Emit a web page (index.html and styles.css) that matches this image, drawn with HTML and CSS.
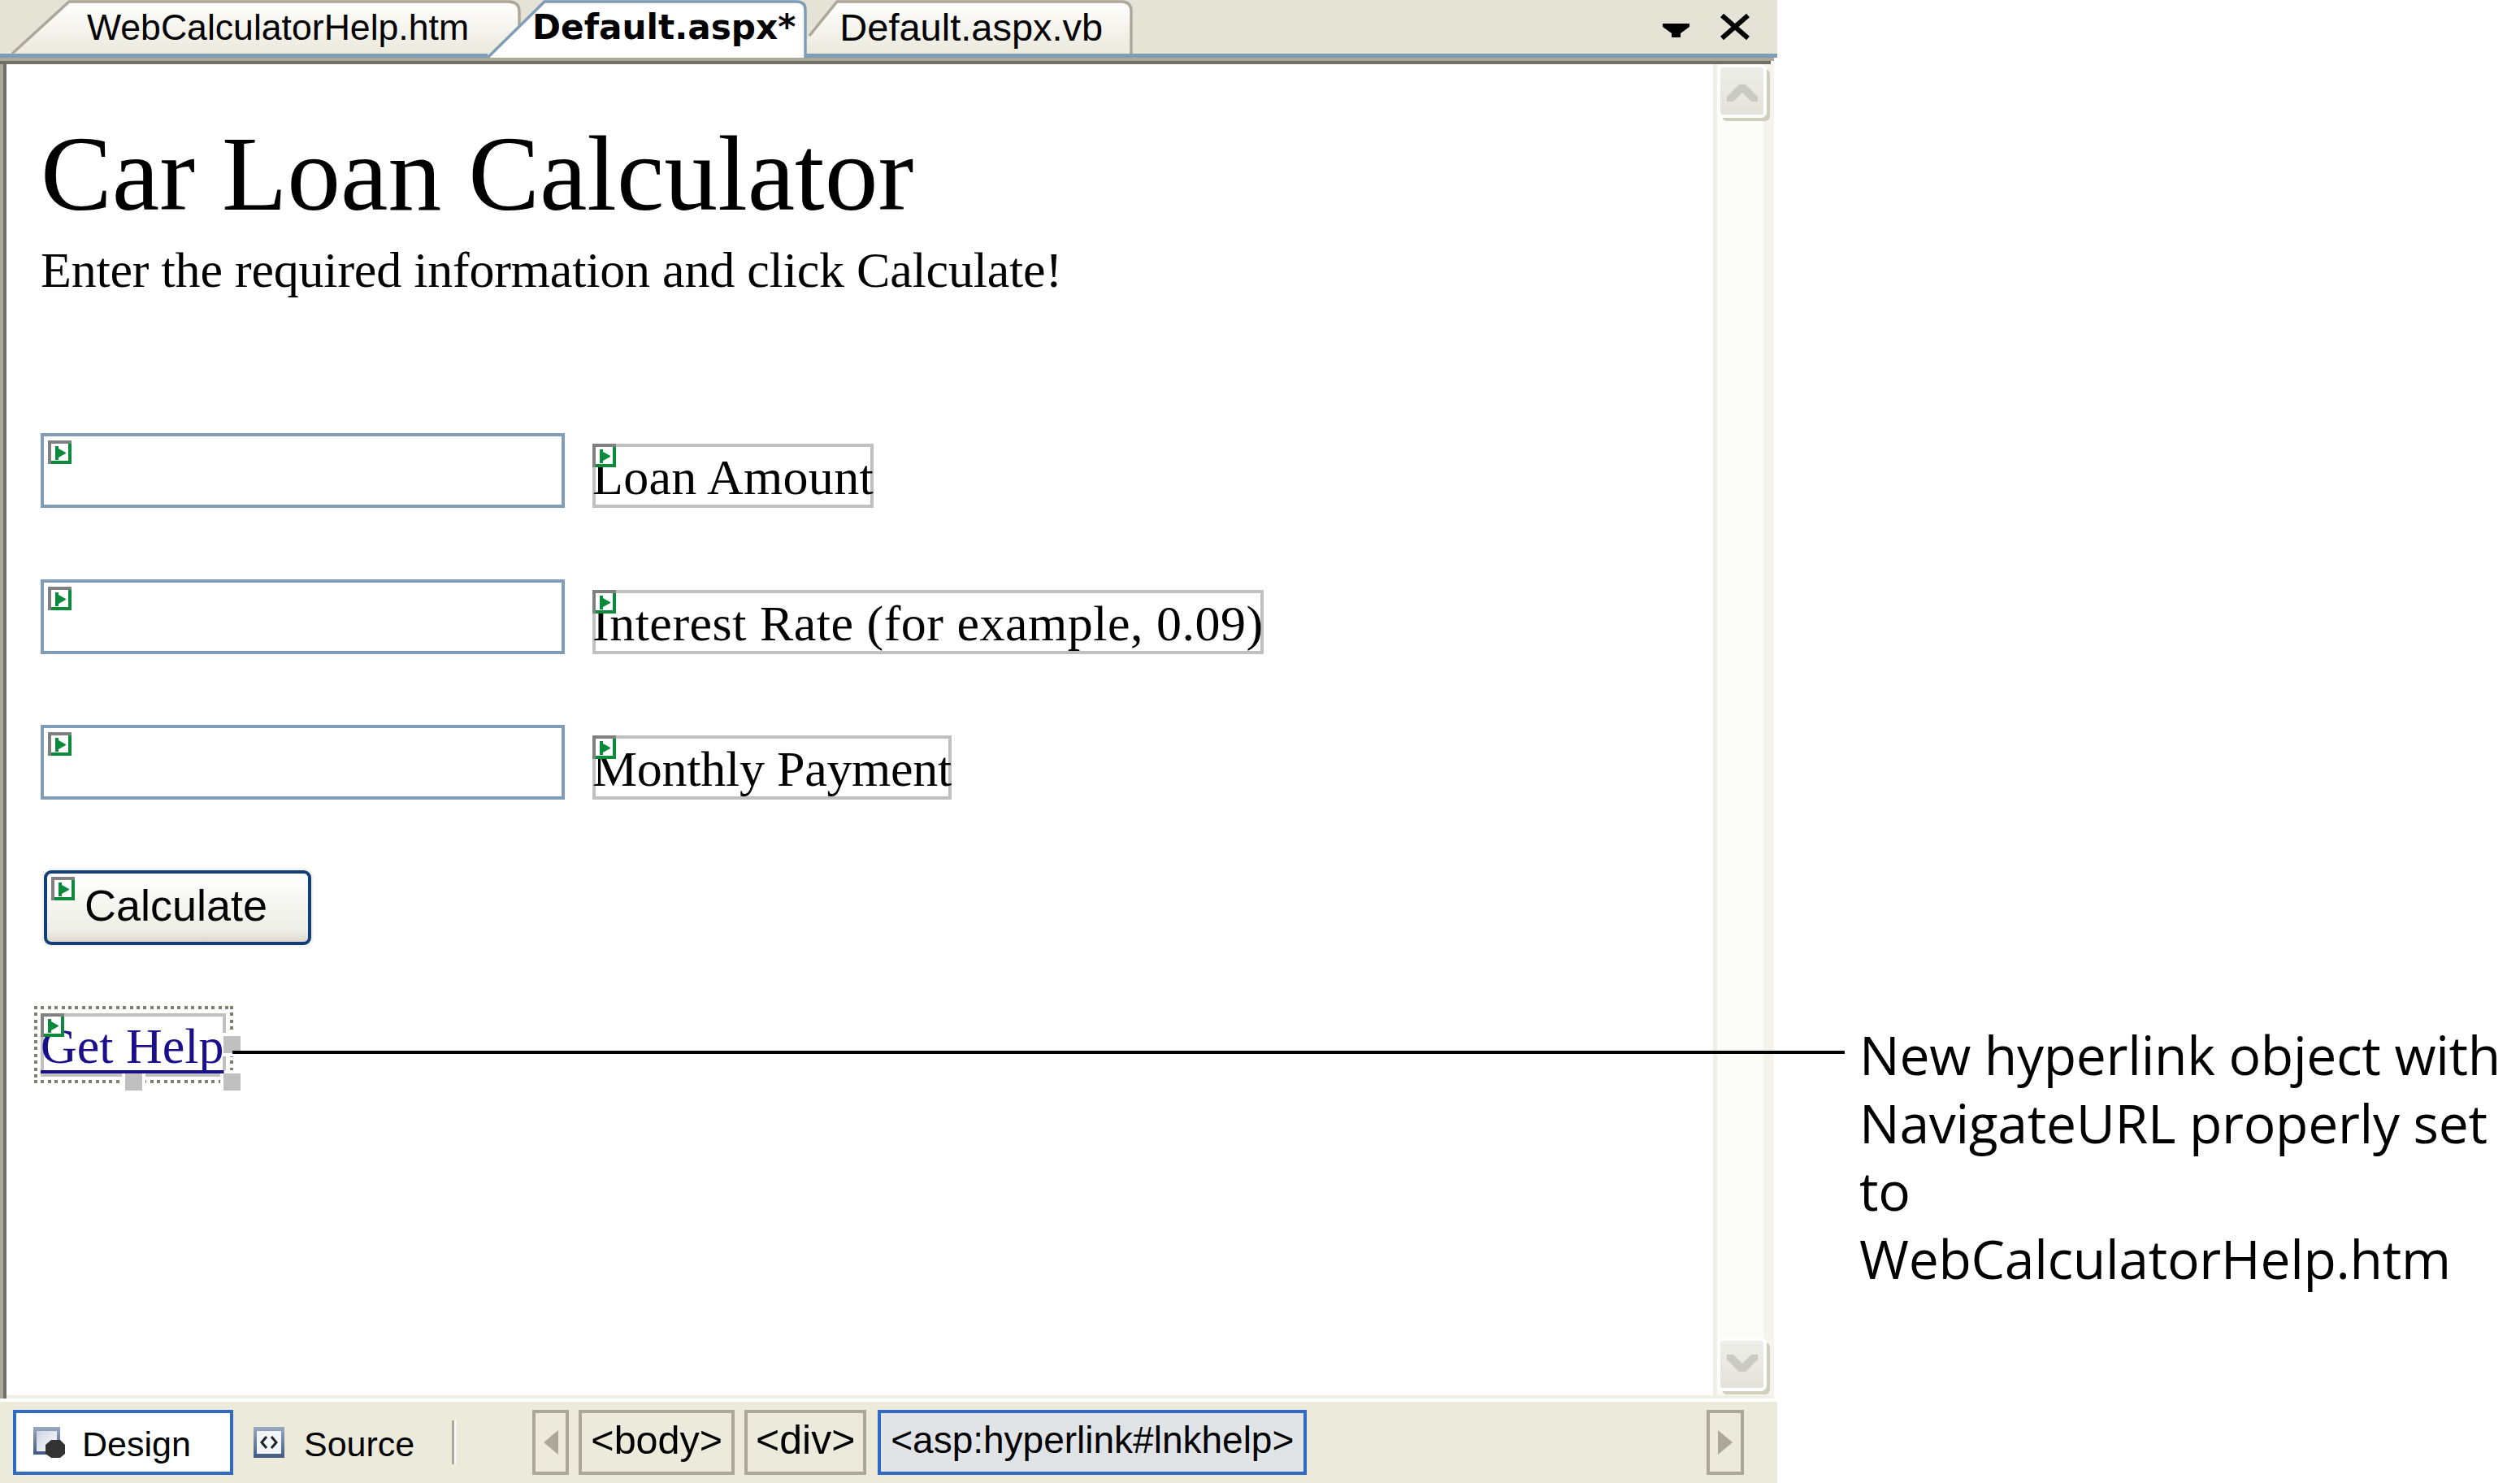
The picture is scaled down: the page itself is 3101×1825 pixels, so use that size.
FILE: index.html
```html
<!DOCTYPE html>
<html lang="en">
<head>
<meta charset="utf-8">
<title>Car Loan Calculator</title>
<link rel="stylesheet" href="styles.css">
</head>
<body>
<svg class="defs" width="0" height="0" aria-hidden="true">
  <symbol id="smart-tag" viewBox="0 0 29 29">
    <rect width="29" height="29" fill="#fff"/>
    <path d="M4 25H25V4H29V29H4Z" fill="#0b8a3c"/>
    <path d="M0 0H29V4H4V29H0Z" fill="#808080"/>
    <path d="M9 7H13V10L22 15V16L13 21V24H9Z" fill="#0b8a3c"/>
  </symbol>
  <linearGradient id="tab-fill" x1="0" y1="0" x2="0" y2="1">
    <stop offset="0" stop-color="#ffffff"/>
    <stop offset="1" stop-color="#ebe9dc"/>
  </linearGradient>
  <linearGradient id="icon-frame" x1="0" y1="0" x2="0" y2="1">
    <stop offset="0" stop-color="#9aa9c0"/>
    <stop offset="1" stop-color="#3f5a80"/>
  </linearGradient>
  <linearGradient id="icon-page" x1="0" y1="0" x2="1" y2="1">
    <stop offset="0" stop-color="#ccd3e0"/>
    <stop offset="1" stop-color="#ffffff"/>
  </linearGradient>
</svg>

<main class="window">
  <header class="tabstrip">
    <svg class="tab-art" width="2187" height="71" viewBox="0 0 2187 71" aria-hidden="true">
      <path d="M0 66H600V71H0ZM992 66H2187V71H992Z" fill="#7f9db9"/>
      <path d="M15 66L85 2H625Q639 2 639 14V66Z" fill="url(#tab-fill)"/>
      <path d="M15 66L85 2H625Q639 2 639 14V56" fill="none" stroke="#aca899" stroke-width="3.5"/>
      <path d="M992 66V50L1030 2H1380Q1392 2 1392 14V66Z" fill="url(#tab-fill)"/>
      <path d="M996 44L1030 2H1380Q1392 2 1392 14V66" fill="none" stroke="#aca899" stroke-width="3.5"/>
      <path d="M600 71L670 2H980Q991 2 991 12V71Z" fill="#fff"/>
      <path d="M600 71L670 2H980Q991 2 991 12V71" fill="none" stroke="#7f9db9" stroke-width="3.5"/>
    </svg>
    <span class="tab tab-help">WebCalculatorHelp.htm</span>
    <span class="tab tab-active">Default.aspx*</span>
    <span class="tab tab-vb">Default.aspx.vb</span>
    <svg class="tab-drop" width="33" height="17" viewBox="0 0 33 17" aria-hidden="true">
      <path d="M0 0H33V4L22 12V17H11V12L0 4Z" fill="#000"/>
    </svg>
    <svg class="tab-close" width="38" height="34" viewBox="0 0 38 34" aria-hidden="true">
      <path d="M3 3L35 31M35 3L3 31" stroke="#000" stroke-width="6" fill="none"/>
    </svg>
  </header>
  <div class="rule-tan"></div>
  <div class="rule-dark"></div>

  <div class="designer">
    <section class="surface">
      <h1 class="title">Car Loan Calculator</h1>
      <p class="subtitle">Enter the required information and click Calculate!</p>

      <div class="form">
        <div class="field">
          <div class="textbox"><svg class="tag tag-input"><use href="#smart-tag"/></svg></div>
          <div class="caption"><svg class="tag tag-edge"><use href="#smart-tag"/></svg><span class="caption-text caption-loan">Loan Amount</span></div>
        </div>
        <div class="field">
          <div class="textbox"><svg class="tag tag-input"><use href="#smart-tag"/></svg></div>
          <div class="caption"><svg class="tag tag-edge"><use href="#smart-tag"/></svg><span class="caption-text caption-rate">Interest Rate (for example, 0.09)</span></div>
        </div>
        <div class="field">
          <div class="textbox"><svg class="tag tag-input"><use href="#smart-tag"/></svg></div>
          <div class="caption"><svg class="tag tag-edge"><use href="#smart-tag"/></svg><span class="caption-text caption-pay">Monthly Payment</span></div>
        </div>
      </div>

      <div class="calc-btn"><svg class="tag tag-btn"><use href="#smart-tag"/></svg><span>Calculate</span></div>

      <div class="selection">
        <div class="linkbox">
          <a class="help-link" href="#">Get Help</a>
          <svg class="tag tag-edge"><use href="#smart-tag"/></svg>
        </div>
        <i class="handle handle-right"></i>
        <i class="handle handle-mid"></i>
        <i class="handle handle-corner"></i>
      </div>
    </section>

    <aside class="scrollbar">
      <div class="scroll-btn">
        <svg width="38" height="25" viewBox="0 0 38 25" aria-hidden="true"><path d="M0 19L15 4H23L38 19V25H30L19 14L8 25H0Z" fill="#c9cac3"/></svg>
      </div>
      <div class="scroll-btn">
        <svg width="38" height="25" viewBox="0 0 38 25" aria-hidden="true"><path d="M0 6L15 21H23L38 6V0H30L19 11L8 0H0Z" fill="#c9cac3"/></svg>
      </div>
    </aside>
  </div>
  <div class="rule-cream"></div>
  <div class="rule-white"></div>

  <footer class="bottombar">
    <div class="view view-on">
      <svg width="39" height="38" viewBox="0 0 39 38" aria-hidden="true">
        <rect width="33" height="34" fill="url(#icon-frame)"/>
        <rect x="4" y="5" width="25" height="25" fill="url(#icon-page)"/>
        <path d="M22 16H33L39 22V33L33 38H22L15 33V22Z" fill="#333"/>
      </svg>
      <span>Design</span>
    </div>
    <div class="view view-off">
      <svg width="38" height="38" viewBox="0 0 38 38" aria-hidden="true">
        <rect width="38" height="38" fill="url(#icon-frame)"/>
        <rect x="4" y="5" width="30" height="28" fill="#f1f4f9"/>
        <path d="M16 12L10 19L16 26M22 12L28 19L22 26" fill="none" stroke="#222" stroke-width="3"/>
      </svg>
      <span>Source</span>
    </div>
    <div class="sep"></div>
    <div class="crumb crumb-arrow crumb-prev">
      <svg width="18" height="30" viewBox="0 0 18 30" aria-hidden="true"><path d="M18 0V30L0 15Z" fill="#aca899"/></svg>
    </div>
    <div class="crumb crumb-body">&lt;body&gt;</div>
    <div class="crumb crumb-div">&lt;div&gt;</div>
    <div class="crumb crumb-on">&lt;asp:hyperlink#lnkhelp&gt;</div>
    <div class="crumb crumb-arrow crumb-next">
      <svg width="18" height="30" viewBox="0 0 18 30" aria-hidden="true"><path d="M0 0V30L18 15Z" fill="#aca899"/></svg>
    </div>
  </footer>
</main>

<div class="leader"></div>
<p class="note">New hyperlink object with<br>NavigateURL properly set<br>to<br>WebCalculatorHelp.htm</p>
</body>
</html>
```

FILE: styles.css
```css
* { box-sizing: border-box; }
html, body { margin: 0; padding: 0; background: #fff; }
body { position: relative; width: 3101px; height: 1825px; overflow: hidden; font-family: "Liberation Sans", Arial, sans-serif; color: #000; }
.defs { position: absolute; }

.window { display: flex; flex-direction: column; width: 2187px; height: 1825px; }

.tabstrip { position: relative; display: flex; flex: none; height: 71px; padding: 0 33px 5px 0; background: #e4e3d6; font-size: 44.6px; }
.tab { position: relative; line-height: 66px; padding-top: 1px; white-space: nowrap; }
.tab-art { position: absolute; left: 0; top: 0; }
.tab-help { margin-left: 107px; }
.tab-active { margin-left: 78px; font-family: "DejaVu Sans", sans-serif; font-weight: 700; font-size: 42.2px; }
.tab-vb { margin-left: 54px; font-size: 47px; }
.tab-drop { position: relative; flex: none; margin: 29px 0 0 auto; }
.tab-close { position: relative; flex: none; margin: 16px 0 0 37px; }

.rule-tan { flex: none; width: 2183px; height: 4px; background: #aca899; }
.rule-dark { flex: none; width: 2179px; height: 4px; background: #716f64; }

.designer { display: flex; flex: 1; width: 2183px; min-height: 0; }

.surface { position: relative; flex: 1; min-width: 0; padding: 69px 0 0 42px; background: #fff; border-left: 8px solid #716f64; font-family: "Liberation Serif", "Times New Roman", serif; }
.surface::before { content: ""; position: absolute; left: -8px; top: 0; bottom: -4px; width: 4px; background: #aca899; }
.surface::after { content: ""; position: absolute; left: -4px; top: 0; bottom: -4px; width: 4px; background: #716f64; }

.title { margin: 0; font-size: 131.6px; line-height: 132px; font-weight: 400; }
.subtitle { margin: 21px 0 0; font-size: 62px; line-height: 62px; letter-spacing: -0.2px; white-space: nowrap; }

.form { display: grid; row-gap: 87.5px; margin-top: 170px; }
.field { display: flex; align-items: flex-end; gap: 34px; height: 92px; }

.textbox { position: relative; flex: none; width: 645px; height: 92px; border: 4px solid #7f9db9; background: #fff; }
.caption { position: relative; flex: none; height: 79px; border: 4px solid #c0c0c0; padding-top: 6px; font-size: 62px; line-height: 62px; white-space: nowrap; }
.caption-text { display: block; position: relative; margin: 0 -4px; }
.caption-loan { letter-spacing: 0.3px; }
.caption-rate { letter-spacing: 0.5px; }
.caption-pay { letter-spacing: -0.27px; }

.tag { position: absolute; width: 29px; height: 29px; display: block; }
.tag-input { left: 5px; top: 5px; }
.tag-edge { left: -4px; top: -4px; z-index: 3; }
.tag-btn { left: 5px; top: 4px; }

.calc-btn { position: relative; display: flex; align-items: center; justify-content: center; width: 329px; height: 92px; margin: 87px 0 0 4px; padding: 0 4px 6px 0; border: 4px solid #123f78; border-radius: 9px; background: linear-gradient(#ffffff 0%, #f2f2ec 60%, #eeeee8 84%, #dcd7cb 100%); box-shadow: 0 0 0 3px #f5f5f2; font-family: "Liberation Sans", Arial, sans-serif; font-size: 54px; }

.selection { position: relative; width: 245px; height: 95px; margin: 75px 0 0 -8px; padding: 9px 0 0 8px;
  background:
    repeating-linear-gradient(90deg, #7f7f70 0 4px, transparent 4px 8.4px) left top / 100% 4px no-repeat,
    repeating-linear-gradient(90deg, #7f7f70 0 4px, transparent 4px 8.4px) left bottom / 100% 4px no-repeat,
    repeating-linear-gradient(180deg, #7f7f70 0 4px, transparent 4px 8.4px) left top / 4px 100% no-repeat,
    repeating-linear-gradient(180deg, #7f7f70 0 4px, transparent 4px 8.4px) right top / 4px 100% no-repeat;
}
.linkbox { position: relative; width: 228px; height: 78px; border: 4px solid #c0c0c0; padding-top: 5px; font-size: 62px; line-height: 62px; white-space: nowrap; }
.help-link { position: relative; z-index: 2; display: block; margin-left: -4px; color: #1a0e8a; text-decoration: underline; text-decoration-thickness: 4px; text-underline-offset: 9px; text-decoration-skip-ink: none; }

.handle { position: absolute; width: 21px; height: 21px; }
.handle::before { content: ""; position: absolute; inset: -4px; background: #fff; z-index: 1; }
.handle::after { content: ""; position: absolute; inset: 0; background: #c0c0c0; z-index: 4; }
.handle-right { left: 233px; top: 37px; }
.handle-mid { left: 112px; top: 83px; }
.handle-corner { left: 233px; top: 83px; }

.scrollbar { display: flex; flex: none; flex-direction: column; justify-content: space-between; width: 75px; padding: 4px 13px 9px 9px; background: linear-gradient(90deg, #efefe7 0 5px, #fbfbf8 5px 62px, #f4f3ec 62px 100%); }
.scroll-btn { display: flex; align-items: center; justify-content: center; width: 53px; height: 58px; border-radius: 3px; background: linear-gradient(#eeeee9, #e3e3da); box-shadow: 0 0 0 4px #fff, 5px 5px 0 3px #cfcfbc; }

.rule-cream { flex: none; width: 2183px; height: 4px; background: #f1efe6; }
.rule-white { flex: none; height: 4px; background: #fff; }

.bottombar { display: flex; flex: none; align-items: center; height: 100px; padding: 0 41px 0 16px; background: #ebeadb; font-size: 43px; }
.view { display: flex; flex: none; align-items: center; height: 80px; }
.view span { padding-top: 5px; }
.view-on { width: 271px; gap: 21px; padding-left: 21px; border: 4px solid #316ac5; background: #fff; }
.view-off { margin-left: 25px; gap: 24px; }
.sep { flex: none; width: 5px; height: 54px; margin-left: 46px; background: linear-gradient(90deg, #aca899 0 2.5px, #fff 2.5px); }

.crumb { display: flex; flex: none; align-items: center; justify-content: center; height: 80px; padding-bottom: 6px; border: 4px solid #aca899; font-size: 46px; white-space: nowrap; }
.crumb-arrow { width: 45px; padding-bottom: 0; }
.crumb-prev { margin-left: 94px; }
.crumb-body { width: 192px; margin-left: 12px; font-size: 48.5px; }
.crumb-div { width: 150px; margin-left: 12px; font-size: 50px; }
.crumb-on { width: 528px; margin-left: 14px; border-color: #316ac5; background: #e1e4e7; }
.crumb-next { width: 46px; margin-left: auto; }

.leader { position: absolute; z-index: 5; left: 286px; top: 1293px; width: 1984px; height: 4px; background: #000; }
.note { position: absolute; left: 2288px; top: 1256px; margin: 0; width: 813px; font-family: "Open Sans", sans-serif; font-size: 66px; line-height: 83.5px; letter-spacing: -0.3px; white-space: nowrap; }
```
